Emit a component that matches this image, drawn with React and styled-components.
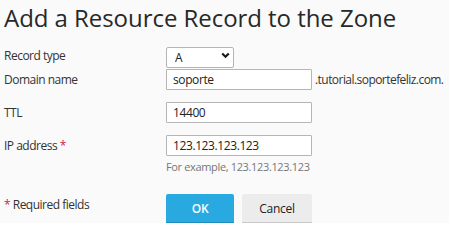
import styled, { createGlobalStyle } from 'styled-components'

const Global = createGlobalStyle`
	html, body {
		margin: 0;
		background: #ffffff;
	}
	body {
		font-family: "Open Sans", "DejaVu Sans", sans-serif;
		color: #333333;
	}
`;

const Panel = styled.div`
	width: 449px;
	height: 223px;
	background: #fafafa;
	box-sizing: border-box;
	padding: 2px 0 0 4px;
`;

const Title = styled.h1`
	margin: 0;
	font-size: 24px;
	font-weight: 400;
	line-height: 32px;
	color: #282828;
	letter-spacing: -0.05px;
`;

const Form = styled.div`
	display: grid;
	grid-template-columns: 162px auto;
	margin-top: 11px;
`;

const Label = styled.div`
	font-size: 12px;
	line-height: 21px;
	letter-spacing: -0.5px;
	margin-top: ${p => p.$top || 0}px;
	color: #333;
`;

const Field = styled.div`
	display: flex;
	flex-direction: column;
	margin-top: ${p => p.$top || 0}px;
`;

const Line = styled.div`
	display: flex;
	align-items: center;
`;

const SelectWrap = styled.div`
	position: relative;
	width: 68px;
	height: 21px;
`;

const Select = styled.select`
	appearance: none;
	width: 100%;
	height: 100%;
	box-sizing: border-box;
	border: 1px solid #b5b5b5;
	border-radius: 2px;
	background: #fff;
	font: 12px "Open Sans", sans-serif;
	color: #222;
	padding: 0 0 0 8px;
	outline: none;
`;

const Chevron = styled.svg`
	position: absolute;
	right: 4px;
	top: 7px;
	width: 9px;
	height: 7px;
	pointer-events: none;
`;

const Input = styled.input`
	width: 146px;
	height: 21px;
	box-sizing: border-box;
	border: 1px solid #b5b5b5;
	border-radius: 1px;
	background: #fff;
	font: 12px "Open Sans", sans-serif;
	letter-spacing: -0.4px;
	color: #222;
	padding: 0 6px;
	outline: none;
`;

const Suffix = styled.span`
	font-size: 12px;
	margin-left: 3px;
	color: #333;
	letter-spacing: -0.55px;
`;

const Hint = styled.div`
	font-size: 11px;
	color: #777;
	margin-top: 3px;
	line-height: 15px;
	letter-spacing: -0.35px;
`;

const Star = styled.span`
	color: #d3214a;
`;

const Buttons = styled.div`
	display: flex;
	gap: 8px;
	margin-top: ${p => p.$top || 0}px;
`;

const Button = styled.button`
	width: ${p => p.$w}px;
	height: 30px;
	box-sizing: border-box;
	border: none;
	border-radius: 2px;
	border-bottom: 2px solid ${p => (p.$primary ? '#1d8cbc' : '#c9c9c9')};
	background: ${p => (p.$primary ? '#28aae1' : '#ececec')};
	color: ${p => (p.$primary ? '#ffffff' : '#222')};
	font: ${p => (p.$primary ? 600 : 400)} 12px "Open Sans", sans-serif;
	letter-spacing: -0.3px;
	padding: 0;
`;

export default function App() {
	return (
		<>
			<Global />
			<Panel>
				<Title>Add a Resource Record to the Zone</Title>
				<Form>
					<Label>Record type</Label>
					<Field>
						<SelectWrap>
							<Select defaultValue="A">
								<option>A</option>
							</Select>
							<Chevron viewBox="0 0 9 7">
								<path d="M1.2 1.5 L4.5 4.8 L7.8 1.5" fill="none" stroke="#1a1a1a" strokeWidth="2.2" />
							</Chevron>
						</SelectWrap>
					</Field>

					<Label $top={3}>Domain name</Label>
					<Field $top={3}>
						<Line>
							<Input defaultValue="soporte" />
							<Suffix>.tutorial.soportefeliz.com.</Suffix>
						</Line>
					</Field>

					<Label $top={12}>TTL</Label>
					<Field $top={12}>
						<Input defaultValue="14400" />
					</Field>

					<Label $top={12}>IP address <Star>*</Star></Label>
					<Field $top={12}>
						<Input defaultValue="123.123.123.123" />
						<Hint>For example, 123.123.123.123</Hint>
					</Field>

					<Label $top={20}><Star>*</Star> Required fields</Label>
					<Buttons $top={20}>
						<Button $primary $w={68}>OK</Button>
						<Button $w={70}>Cancel</Button>
					</Buttons>
				</Form>
			</Panel>
		</>
	)
}
